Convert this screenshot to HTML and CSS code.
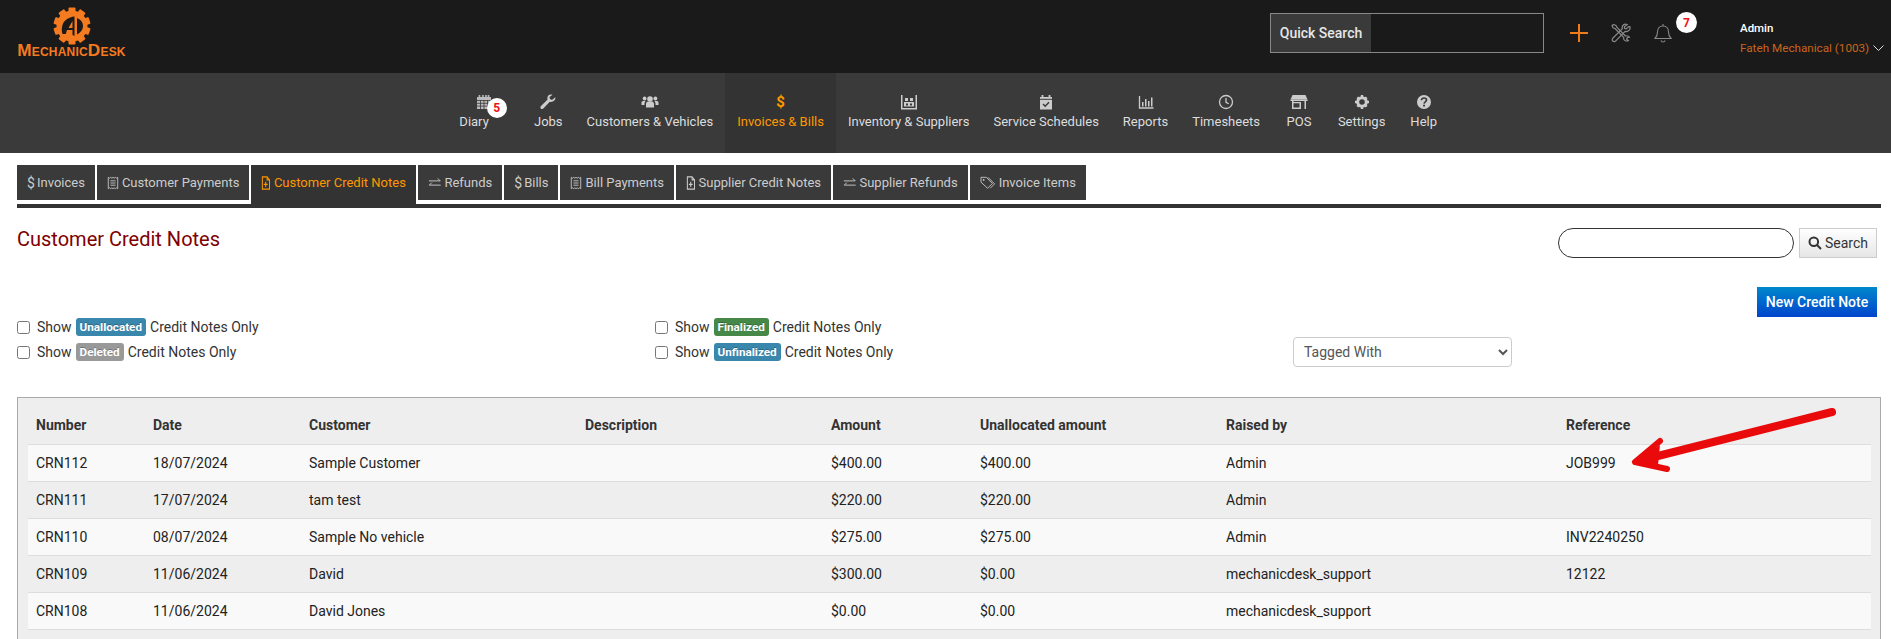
FILE: index.html
```html
<!DOCTYPE html>
<html lang="en">
<head>
<meta charset="utf-8">
<title>Customer Credit Notes</title>
<link rel="stylesheet" href="styles.css">
</head>
<body>
<svg class="defs" width="0" height="0">
  <symbol id="i-receipt" viewBox="0 0 14 16" preserveAspectRatio="none"><path d="M1.500 1.500l1.400 1 1.400-1 1.400 1 1.300-1 1.300 1 1.400-1 1.400 1 1.400-1v13l-1.400-1-1.400 1-1.400-1-1.300 1-1.300-1-1.400 1-1.400-1-1.400 1z" fill="none" stroke="currentColor"/><path d="M4 5.500h6M4 8h6M4 10.500h6" stroke="currentColor" fill="none"/></symbol>
  <symbol id="i-note" viewBox="0 0 14 16" preserveAspectRatio="none"><path d="M2 1h7l3.500 3.500V15H2z" fill="none" stroke="currentColor" stroke-width="1.500"/><path d="M9 1v3.500h3.500M7 6.500v6M4.200 9.500h5.600" fill="none" stroke="currentColor" stroke-width="1.500"/></symbol>
  <symbol id="i-swap" viewBox="0 0 16 16"><path d="M1 5.500h13.500M11.500 2.500l3 3M15 10.500H1.500M4.500 7.500l-3 3" fill="none" stroke="currentColor" stroke-width="1.100"/></symbol>
  <symbol id="i-tags" viewBox="0 0 18 16"><path d="M1 1.500h6l7 7-5.500 5.500-7.500-7z" fill="none" stroke="currentColor"/><path d="M9 1.500l7.500 7.500-5 5" fill="none" stroke="currentColor"/><circle cx="4" cy="4.500" r="1" fill="currentColor"/></symbol>
</svg>
<div class="page">
  <header class="topbar">
    <a class="logo">
      <svg class="logo-gear" width="38" height="38" viewBox="0 0 38 38">
        <g fill="#f47b20">
          <circle cx="19" cy="19" r="15.500"/>
          <rect x="15.500" y="0.500" width="7" height="6" rx="1"/>
          <rect x="15.500" y="0.500" width="7" height="6" rx="1" transform="rotate(36 19 19)"/>
          <rect x="15.500" y="0.500" width="7" height="6" rx="1" transform="rotate(72 19 19)"/>
          <rect x="15.500" y="0.500" width="7" height="6" rx="1" transform="rotate(108 19 19)"/>
          <rect x="15.500" y="0.500" width="7" height="6" rx="1" transform="rotate(144 19 19)"/>
          <rect x="15.500" y="0.500" width="7" height="6" rx="1" transform="rotate(180 19 19)"/>
          <rect x="15.500" y="0.500" width="7" height="6" rx="1" transform="rotate(216 19 19)"/>
          <rect x="15.500" y="0.500" width="7" height="6" rx="1" transform="rotate(252 19 19)"/>
          <rect x="15.500" y="0.500" width="7" height="6" rx="1" transform="rotate(288 19 19)"/>
          <rect x="15.500" y="0.500" width="7" height="6" rx="1" transform="rotate(324 19 19)"/>
        </g>
        <path d="M21.500 9.500V29L18 27H9.500C8.500 24 8.500 21 9.500 18 11 13.500 15.500 10 21.500 9.500z" fill="#1a1a1a"/>
        <path d="M19.500 14V21H15.500zM19.500 23V28H12.500l1.500-5z" fill="#f47b20"/>
        <path d="M24 11c4 1.500 6 4.500 6 8s-2 6.500-6 8.500z" fill="#1a1a1a"/>
      </svg>
      <span class="logo-text">MechanicDesk</span>
    </a>
    <div class="top-tools">
      <div class="quick">
        <span class="quick-label">Quick Search</span>
        <span class="quick-field"></span>
      </div>
      <svg class="tool-plus" width="20" height="20" viewBox="0 0 20 20"><path d="M10 1v18M1 10h18" stroke="#f07b1a" stroke-width="2" fill="none"/></svg>
      <svg class="tool-spanner" width="20" height="20" viewBox="0 0 20 20" fill="none" stroke="#8a8a8a" stroke-width="1.200">
        <path d="M2.500 1.500l2.500 1 1 2 8.500 8.500c1.500-.5 3 0 3.800 1.200l-2 .3-.6 1.800 1.600 1.400c-1.600.7-3.700.1-4.400-1.300-.4-.9-.3-1.500-.2-2L4 5.500l-2-.8-1-2z"/>
        <path d="M17.800 3.500l-2.600 2.400-1.500-.4-.4-1.500L16.200 1.500c-1.800-.6-3.800-.1-4.700 1.500-.5 1-.4 2-.1 2.700L2 15c-1 1-1 2.200-.2 3s2.100.8 3-.2l9.300-9.400c1 .3 2 .3 3-.3 1.600-1 2.300-3 1.700-4.600z"/>
      </svg>
      <div class="bell">
        <svg width="18" height="20" viewBox="0 0 18 20" fill="none" stroke="#8a8a8a" stroke-width="1.100"><path d="M9 1v2M9 3c-3.500 0-5.500 2.500-5.500 6 0 3.500-1 5-2.500 6.500h16c-1.500-1.500-2.500-3-2.500-6.500 0-3.500-2-6-5.500-6zM6.800 17.500c.5 1 1.200 1.500 2.200 1.500s1.700-.5 2.200-1.500"/></svg>
        <span class="count count-top">7</span>
      </div>
      <div class="user">
        <div class="user-name">Admin</div>
        <div class="user-shop">Fateh Mechanical (1003)
          <svg class="user-caret" width="11" height="6" viewBox="0 0 11 6"><path d="M.5.500l5 5 5-5" fill="none" stroke="#ddd" stroke-width="1"/></svg>
        </div>
      </div>
    </div>
  </header>

  <nav class="mainnav">
    <a class="nav-item nav-diary">
      <svg class="nav-icon nav-icon-diary" width="16" height="16" viewBox="0 0 16 16"><path d="M1 3h14v12H1z" fill="#bbb"/><path d="M3.500 1v3M7 1v3M10 1v3M12.500 1v3" stroke="#bbb" stroke-width="1.600"/><path d="M1 6.500h14M1 9.300h14M1 12.100h14M4.500 6v9M8 6v9M11.500 6v9" stroke="#3a3a3a" stroke-width=".8"/></svg>
      <span>Diary</span>
      <span class="count count-nav">5</span>
    </a>
    <a class="nav-item">
      <svg class="nav-icon" width="16" height="16" viewBox="0 0 16 16"><path d="M15 3.500l-3 2.500-2-1-.5-2L12.500.7C10.500 0 8.300.8 7.600 2.700c-.4 1-.3 2 0 2.800L1 12c-.8.800-.8 1.800-.2 2.500s1.800.7 2.500 0l6.500-6.700c1 .3 2 .2 3-.3 1.900-.9 2.800-2.700 2.700-4z" fill="#ccc"/></svg>
      <span>Jobs</span>
    </a>
    <a class="nav-item">
      <svg class="nav-icon" width="18" height="16" viewBox="0 0 18 16" fill="#ccc"><circle cx="9" cy="5" r="2.800"/><circle cx="3.600" cy="4.500" r="1.900"/><circle cx="14.400" cy="4.500" r="1.900"/><path d="M5 13.500V10c0-1.500 1-2.500 2-2.500h4c1 0 2 1 2 2.500v3.500z"/><path d="M.5 11V8.500C.5 7.500 1.500 7 2.300 7h2.200c-.6.700-1 1.500-1 2.500V11zM17.500 11V8.500C17.500 7.500 16.500 7 15.700 7h-2.200c.6.700 1 1.500 1 2.500V11z"/></svg>
      <span>Customers &amp; Vehicles</span>
    </a>
    <a class="nav-item is-active">
      <span class="nav-dollar">$</span>
      <span>Invoices &amp; Bills</span>
    </a>
    <a class="nav-item">
      <svg class="nav-icon" width="18" height="16" viewBox="0 0 18 16" fill="#ccc"><path d="M1 1h1.500v13h13V1H17v14.500H1z"/><path d="M4 8h10v4.500H4zM5 4h3v3H5zM10 4h3v3h-3z"/><path d="M6 9.500h2v2H6zM10 9.500h2v2h-2z" fill="#3a3a3a"/></svg>
      <span>Inventory &amp; Suppliers</span>
    </a>
    <a class="nav-item">
      <svg class="nav-icon" width="16" height="16" viewBox="0 0 16 16"><path d="M2 3h12v12.500H2z" fill="#ccc"/><path d="M4.500 1v3M11.500 1v3" stroke="#ccc" stroke-width="1.800"/><path d="M2 5.300h12" stroke="#3a3a3a"/><path d="M5 10l2.200 2.200L11 8.300" stroke="#3a3a3a" stroke-width="1.500" fill="none"/></svg>
      <span>Service Schedules</span>
    </a>
    <a class="nav-item">
      <svg class="nav-icon" width="16" height="16" viewBox="0 0 16 16"><path d="M1.500 2v12h14" stroke="#ccc" stroke-width="1.300" fill="none"/><path d="M4 8h1.500v4.500H4zM7 5h1.500v7.500H7zM10 7h1.500v5.500H10zM13 3.500h1.500v9H13z" fill="#ccc"/></svg>
      <span>Reports</span>
    </a>
    <a class="nav-item">
      <svg class="nav-icon" width="16" height="16" viewBox="0 0 16 16" fill="none" stroke="#ccc" stroke-width="1.300"><circle cx="8" cy="8" r="6.500"/><path d="M8 4v4.300l2.800 1.500"/></svg>
      <span>Timesheets</span>
    </a>
    <a class="nav-item nav-pos">
      <svg class="nav-icon" width="18" height="16" viewBox="0 0 18 16"><path d="M2.500 1h13L17.500 5.500H.5z" fill="#ccc"/><path d="M.5 5.500h17v1.500H.5z" fill="#ccc"/><path d="M2 7h1.500v8H2zM14.500 7H16v8h-1.500zM3 13.500h8V15H3zM9.500 8H11v6H9.500zM3 8h8v1.300H3z" fill="#ccc"/></svg>
      <span>POS</span>
    </a>
    <a class="nav-item nav-settings">
      <svg class="nav-icon" width="16" height="16" viewBox="0 0 16 16"><circle cx="8" cy="8" r="4.300" fill="none" stroke="#ccc" stroke-width="3"/><path d="M6.800 1h2.400v3H6.800zM6.800 12h2.400v3H6.800zM1 6.800h3v2.400H1zM12 6.800h3v2.400h-3zM2.500 4.200L4.200 2.500l2 2-1.700 1.700zM9.800 11.500l1.700-1.700 2 2-1.700 1.700zM2.500 11.800l2-2 1.700 1.700-2 2zM9.800 4.500l2-2 1.700 1.700-2 2z" fill="#ccc"/></svg>
      <span>Settings</span>
    </a>
    <a class="nav-item">
      <svg class="nav-icon" width="16" height="16" viewBox="0 0 16 16"><circle cx="8" cy="8" r="7" fill="#ccc"/><path d="M5.500 6.200c0-1.500 1.100-2.200 2.500-2.200s2.500.8 2.500 2c0 1.800-2.300 1.800-2.400 3.600" fill="none" stroke="#3a3a3a" stroke-width="1.700"/><path d="M7.100 10.700h1.900v1.900H7.100z" fill="#3a3a3a"/></svg>
      <span>Help</span>
    </a>
  </nav>

  <main class="content">
    <div class="tabs">
      <a class="tab"><span class="tab-dollar">$</span>Invoices</a>
      <a class="tab"><svg class="tab-icon" width="12" height="14"><use href="#i-receipt"/></svg>Customer Payments</a>
      <a class="tab is-active"><svg class="tab-icon" width="9.500" height="14"><use href="#i-note"/></svg>Customer Credit Notes</a>
      <a class="tab"><svg class="tab-icon" width="13.500" height="14"><use href="#i-swap"/></svg>Refunds</a>
      <a class="tab"><span class="tab-dollar">$</span>Bills</a>
      <a class="tab"><svg class="tab-icon" width="12" height="14"><use href="#i-receipt"/></svg>Bill Payments</a>
      <a class="tab"><svg class="tab-icon" width="9.500" height="14"><use href="#i-note"/></svg>Supplier Credit Notes</a>
      <a class="tab"><svg class="tab-icon" width="13.500" height="14"><use href="#i-swap"/></svg>Supplier Refunds</a>
      <a class="tab"><svg class="tab-icon" width="16" height="14"><use href="#i-tags"/></svg>Invoice Items</a>
    </div>

    <div class="title-row">
      <h1 class="title">Customer Credit Notes</h1>
      <form class="search">
        <input class="search-input" type="text" aria-label="Search">
        <button class="search-btn" type="button">
          <svg width="14" height="14" viewBox="0 0 14 14" fill="none" stroke="#333" stroke-width="2"><circle cx="5.800" cy="5.800" r="4.300"/><path d="M9 9l4 4"/></svg>
          Search
        </button>
      </form>
    </div>

    <div class="action-row">
      <button class="primary-btn" type="button">New Credit Note</button>
    </div>

    <div class="filters">
      <div class="filter-col">
        <label class="filter"><input type="checkbox"> Show <span class="badge badge-info">Unallocated</span> Credit Notes Only</label>
        <label class="filter"><input type="checkbox"> Show <span class="badge badge-grey">Deleted</span> Credit Notes Only</label>
      </div>
      <div class="filter-col">
        <label class="filter"><input type="checkbox"> Show <span class="badge badge-green">Finalized</span> Credit Notes Only</label>
        <label class="filter"><input type="checkbox"> Show <span class="badge badge-info">Unfinalized</span> Credit Notes Only</label>
      </div>
      <div class="filter-col filter-col-select">
        <select class="tag-select" aria-label="Tagged With"><option>Tagged With</option></select>
      </div>
    </div>

    <section class="panel">
      <table class="grid">
        <colgroup>
          <col class="c-num"><col class="c-date"><col class="c-cust"><col class="c-desc"><col class="c-amt"><col class="c-unal"><col class="c-raised"><col>
        </colgroup>
        <thead>
          <tr><th>Number</th><th>Date</th><th>Customer</th><th>Description</th><th>Amount</th><th>Unallocated amount</th><th>Raised by</th><th>Reference</th></tr>
        </thead>
        <tbody>
          <tr><td>CRN112</td><td>18/07/2024</td><td>Sample Customer</td><td></td><td>$400.00</td><td>$400.00</td><td>Admin</td><td>JOB999</td></tr>
          <tr><td>CRN111</td><td>17/07/2024</td><td>tam test</td><td></td><td>$220.00</td><td>$220.00</td><td>Admin</td><td></td></tr>
          <tr><td>CRN110</td><td>08/07/2024</td><td>Sample No vehicle</td><td></td><td>$275.00</td><td>$275.00</td><td>Admin</td><td>INV2240250</td></tr>
          <tr><td>CRN109</td><td>11/06/2024</td><td>David</td><td></td><td>$300.00</td><td>$0.00</td><td>mechanicdesk_support</td><td>12122</td></tr>
          <tr><td>CRN108</td><td>11/06/2024</td><td>David Jones</td><td></td><td>$0.00</td><td>$0.00</td><td>mechanicdesk_support</td><td></td></tr>
        </tbody>
      </table>
    </section>
  </main>
</div>
<svg class="annotation" width="1891" height="639" viewBox="0 0 1891 639">
  <path d="M1832 412L1646 459" stroke="#e90b0b" stroke-width="8" stroke-linecap="round" fill="none"/>
  <path d="M1660 441L1635 462L1667 469" stroke="#e90b0b" stroke-width="6" stroke-linecap="round" stroke-linejoin="round" fill="none"/>
  <path d="M1635 462L1660 445L1658 465z" fill="#e90b0b"/>
</svg>
</body>
</html>
```

FILE: styles.css
```css
* { box-sizing: border-box; }
html, body { margin: 0; padding: 0; height: 100%; overflow: hidden; }
body {
  position: relative;
  background: #fff;
  color: #333;
  font-family: Roboto, "Liberation Sans", sans-serif;
  font-size: 13px;
}
.defs { position: absolute; }
.page { display: flex; flex-direction: column; height: 639px; }

/* top bar */
.topbar {
  flex: 0 0 73px;
  display: flex;
  align-items: center;
  justify-content: space-between;
  padding: 0 7px 7px 18px;
  background: #1a1a1a;
}
.logo { display: flex; flex-direction: column; align-items: center; align-self: flex-start; width: 107px; margin-top: 7px; }
.logo-text {
  font-family: "Liberation Sans", sans-serif;
  font-variant: small-caps;
  font-weight: 700;
  font-size: 17.200px;
  line-height: 11px;
  letter-spacing: .2px;
  color: #f47b20;
  white-space: nowrap;
}
.top-tools { display: flex; align-items: center; }
.quick {
  display: flex;
  width: 274px;
  height: 40px;
  border: 1px solid #888;
  margin-right: 25px;
}
.quick-label {
  display: flex;
  align-items: center;
  justify-content: center;
  width: 100px;
  background: #3a3a3a;
  color: #e6e6e6;
  font-size: 14px;
  font-weight: 500;
}
.quick-field { flex: 1; }
.tool-plus { margin-right: 22px; }
.tool-spanner { margin-right: 23px; }
.bell { position: relative; height: 20px; margin-right: 68px; }
.count {
  position: absolute;
  display: flex;
  align-items: center;
  justify-content: center;
  border-radius: 50%;
  background: #fff;
  color: #e11;
  font-weight: 700;
  font-size: 12px;
}
.count-top { left: 22px; top: -11px; width: 21px; height: 21px; }
.user { margin-top: 10px; line-height: 20px; font-size: 11.700px; width: 144px; white-space: nowrap; }
.user-name { color: #fff; font-weight: 500; font-size: 11.500px; }
.user-shop { color: #c8651a; }
.user-caret { margin-left: 1px; vertical-align: 1px; }

/* main nav */
.mainnav {
  flex: 0 0 80px;
  display: flex;
  justify-content: center;
  padding-left: 2.600px;
  background: #3a3a3a;
}
.nav-item {
  position: relative;
  display: flex;
  flex-direction: column;
  align-items: center;
  padding: 20px 12px 0;
  color: #ddd;
  font-size: 13px;
  font-weight: 400;
  line-height: 18px;
  white-space: nowrap;
}
.nav-icon { height: 18px; margin-bottom: 2px; }
.nav-diary { margin-right: 18.400px; }
.nav-pos { margin: 0 2.500px; }
.nav-settings { margin-right: 1px; }
.nav-icon-diary { margin-left: 19px; }
.nav-dollar { height: 18px; margin-bottom: 2px; font-size: 15px; font-weight: 700; line-height: 19px; }
.nav-item.is-active { background: #333; color: #ff9800; }
.count-nav { left: 42px; top: 25px; width: 20px; height: 20px; }

/* content */
.content { flex: 1; display: flex; flex-direction: column; min-height: 0; padding: 12px 10px 0 17px; }
.tabs { display: flex; gap: 2px; border-bottom: 4px solid #333; }
.tab {
  display: flex;
  align-items: center;
  height: 35px;
  margin-bottom: 4px;
  padding: 0 10px;
  background: #3a3a3a;
  color: #ccc;
  font-size: 13px;
  white-space: nowrap;
}
.tab.is-active { height: 39px; margin-bottom: 0; background: #333; color: #ff9800; padding-bottom: 4px; }
.tab-icon { margin-right: 3px; color: currentColor; }
.tab-dollar { width: 10px; font-size: 14px; }

.title-row { display: flex; align-items: flex-start; justify-content: space-between; margin-top: 20px; padding-right: 4px; }
.title { margin: 0; font-size: 20px; font-weight: 400; color: #800000; line-height: 22px; }
.search { display: flex; gap: 5px; margin: 0; }
.search-input { width: 236px; height: 30px; border: 1px solid #333; border-radius: 15px; background: #fff; }
.search-btn {
  display: flex;
  align-items: center;
  justify-content: center;
  gap: 3px;
  width: 78px;
  height: 30px;
  padding: 0;
  border: 1px solid #ccc;
  background: linear-gradient(#fff, #e6e6e6);
  color: #333;
  font: 14px Roboto, sans-serif;
}
.action-row { display: flex; justify-content: flex-end; margin-top: 29px; padding-right: 4px; }
.primary-btn {
  width: 120px;
  height: 30px;
  padding: 0;
  border: 0;
  background: linear-gradient(#0088cc, #0044cc);
  color: #fff;
  font: 500 14px Roboto, sans-serif;
}

.filters { display: grid; grid-template-columns: 638px 638px 1fr; }
.filter-col { display: flex; flex-direction: column; gap: 5px; }
.filter-col-select { padding-top: 20px; }
.filter {
  display: flex;
  align-items: center;
  gap: 4px;
  height: 20px;
  font-size: 14px;
  color: #333;
  white-space: nowrap;
}
.filter input { width: 13px; height: 13px; margin: 0 3px 0 0; }
.badge {
  display: inline-block;
  padding: 0 4px;
  border-radius: 3px;
  color: #fff;
  font-size: 11.700px;
  font-weight: 700;
  line-height: 18px;
  text-shadow: 0 -1px 0 rgba(0, 0, 0, .25);
}
.badge-info { background: #3a87ad; }
.badge-grey { background: #999; }
.badge-green { background: #468847; }
.tag-select {
  width: 219px;
  height: 30px;
  padding: 0 6px;
  border: 1px solid #ccc;
  border-radius: 4px;
  background-color: #fff;
  color: #555;
  font: 14px Roboto, sans-serif;
}

.panel {
  flex: 1;
  margin-top: 30px;
  padding: 0 9px 0 10px;
  border: 1px solid #aaa;
  border-bottom: 0;
  background: #eee;
}
.grid { width: 100%; border-collapse: collapse; table-layout: fixed; }
.c-num { width: 117px; }
.c-date { width: 156px; }
.c-cust { width: 276px; }
.c-desc { width: 246px; }
.c-amt { width: 149px; }
.c-unal { width: 246px; }
.c-raised { width: 340px; }
.grid th, .grid td { padding: 0 8px; text-align: left; font-size: 14px; white-space: nowrap; }
.grid th { height: 46px; padding-top: 9px; font-weight: 700; color: #333; border-bottom: 1px solid #ddd; }
.grid td { height: 37px; color: #222; border-bottom: 1px solid #ddd; }
.grid tbody tr:nth-child(odd) td { background: #f9f9f9; }

.annotation { position: absolute; left: 0; top: 0; pointer-events: none; }
```
